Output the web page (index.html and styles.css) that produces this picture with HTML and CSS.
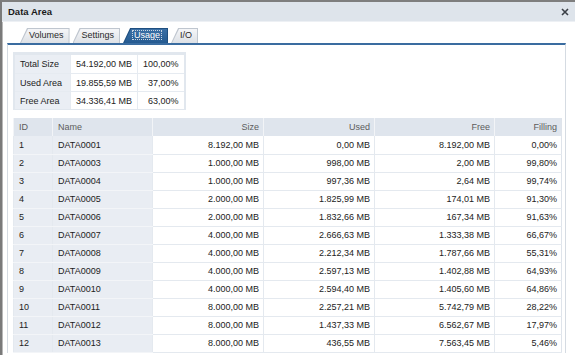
FILE: index.html
```html
<!DOCTYPE html>
<html lang="en">
<head>
    <meta charset="UTF-8">
    <title>Data Area</title>
    <link rel="stylesheet" href="styles.css">
</head>
<body>
    <div class="window">
        <div class="titlebar">
            <span class="title">Data Area</span>
            <svg class="close" width="8" height="8" viewBox="0 0 8 8">
                <path d="M1 1L7 7M7 1L1 7" stroke="#3a3f46" stroke-width="1.6"/>
            </svg>
        </div>
        <div class="tabs">
            <div class="tab"><span>Volumes</span></div>
            <div class="tab"><span>Settings</span></div>
            <div class="tab active"><span>Usage</span></div>
            <div class="tab"><span>I/O</span></div>
        </div>
        <div class="panel">
            <table class="summary">
                <tr><td class="label">Total Size</td><td class="val">54.192,00 MB</td><td class="pct">100,00%</td></tr>
                <tr><td class="label">Used Area</td><td class="val">19.855,59 MB</td><td class="pct">37,00%</td></tr>
                <tr><td class="label">Free Area</td><td class="val">34.336,41 MB</td><td class="pct">63,00%</td></tr>
            </table>
            <table class="grid">
                <colgroup>
                    <col style="width:39px"><col style="width:100px"><col style="width:111px">
                    <col style="width:111px"><col style="width:120px"><col style="width:67px">
                </colgroup>
                <thead>
                    <tr><th>ID</th><th>Name</th><th class="num">Size</th><th class="num">Used</th><th class="num">Free</th><th class="num">Filling</th></tr>
                </thead>
                <tbody>
                    <tr><td class="key">1</td><td class="key">DATA0001</td><td class="num">8.192,00 MB</td><td class="num">0,00 MB</td><td class="num">8.192,00 MB</td><td class="num">0,00%</td></tr>
                    <tr><td class="key">2</td><td class="key">DATA0003</td><td class="num">1.000,00 MB</td><td class="num">998,00 MB</td><td class="num">2,00 MB</td><td class="num">99,80%</td></tr>
                    <tr><td class="key">3</td><td class="key">DATA0004</td><td class="num">1.000,00 MB</td><td class="num">997,36 MB</td><td class="num">2,64 MB</td><td class="num">99,74%</td></tr>
                    <tr><td class="key">4</td><td class="key">DATA0005</td><td class="num">2.000,00 MB</td><td class="num">1.825,99 MB</td><td class="num">174,01 MB</td><td class="num">91,30%</td></tr>
                    <tr><td class="key">5</td><td class="key">DATA0006</td><td class="num">2.000,00 MB</td><td class="num">1.832,66 MB</td><td class="num">167,34 MB</td><td class="num">91,63%</td></tr>
                    <tr><td class="key">6</td><td class="key">DATA0007</td><td class="num">4.000,00 MB</td><td class="num">2.666,63 MB</td><td class="num">1.333,38 MB</td><td class="num">66,67%</td></tr>
                    <tr><td class="key">7</td><td class="key">DATA0008</td><td class="num">4.000,00 MB</td><td class="num">2.212,34 MB</td><td class="num">1.787,66 MB</td><td class="num">55,31%</td></tr>
                    <tr><td class="key">8</td><td class="key">DATA0009</td><td class="num">4.000,00 MB</td><td class="num">2.597,13 MB</td><td class="num">1.402,88 MB</td><td class="num">64,93%</td></tr>
                    <tr><td class="key">9</td><td class="key">DATA0010</td><td class="num">4.000,00 MB</td><td class="num">2.594,40 MB</td><td class="num">1.405,60 MB</td><td class="num">64,86%</td></tr>
                    <tr><td class="key">10</td><td class="key">DATA0011</td><td class="num">8.000,00 MB</td><td class="num">2.257,21 MB</td><td class="num">5.742,79 MB</td><td class="num">28,22%</td></tr>
                    <tr><td class="key">11</td><td class="key">DATA0012</td><td class="num">8.000,00 MB</td><td class="num">1.437,33 MB</td><td class="num">6.562,67 MB</td><td class="num">17,97%</td></tr>
                    <tr><td class="key">12</td><td class="key">DATA0013</td><td class="num">8.000,00 MB</td><td class="num">436,55 MB</td><td class="num">7.563,45 MB</td><td class="num">5,46%</td></tr>
                </tbody>
            </table>
        </div>
    </div>
</body>
</html>
```

FILE: styles.css
```css
* {
    box-sizing: border-box;
    margin: 0;
    padding: 0;
}
body {
    font-family: 'Liberation Sans', Arial, sans-serif;
    font-size: 9px;
    color: #222;
    background-color: #fff;
    overflow: hidden;
}
.window {
    height: 355px;
    border-top: 2px solid #7e7e7e;
    border-left: 2px solid #7a7a7a;
    box-shadow: inset 1px 0 0 #b8b8b8;
    background-color: #fff;
}
.titlebar {
    display: flex;
    justify-content: space-between;
    align-items: center;
    height: 20px;
    padding: 0 6px 0 6px;
    background-color: #dee4eb;
    border-bottom: 1px solid #edf0f4;
}
.title {
    font-weight: bold;
    font-size: 9.5px;
    color: #1a1a1a;
}
/* tabs */
.tabs {
    display: flex;
    gap: 3px;
    height: 15px;
    margin: 6px 0 0 18px;
}
.tab {
    position: relative;
    height: 15px;
    line-height: 15px;
    padding: 0 6px 0 9px;
    color: #2a2a2a;
    background-color: #bfc6cf;
    clip-path: polygon(0 100%, 7px 0, 100% 0, 100% 100%);
}
.tab::before {
    content: '';
    position: absolute;
    top: 1px;
    left: 1px;
    right: 1px;
    bottom: 0;
    background: linear-gradient(#f5f6f8, #dde1e6);
    clip-path: polygon(0 100%, 7px 0, 100% 0, 100% 100%);
}
.tab span {
    position: relative;
}
.tab.active {
    background-color: #1f4f80;
}
.tab.active::before {
    background: linear-gradient(#3b70a6, #255b91);
}
.tab.active span {
    color: #fff;
    padding: 0 2px;
    outline: 1px dotted #c9d6e4;
    outline-offset: -1px;
}
/* content */
.panel {
    height: 310px;
    margin: 0 9px 0 5px;
    padding: 7px 4px 0 5px;
    border: 1px solid #d5dbe2;
    border-top: 2px solid #3a6ca0;
    border-bottom: none;
}
.summary {
    border-collapse: separate;
    border-spacing: 0;
    border: 2px solid #e1e7ee;
    border-top-width: 3px;
    border-bottom-width: 1px;
}
.summary td {
    height: 18px;
    padding: 0 5px;
    white-space: nowrap;
}
.summary tr + tr td {
    border-top: 1px solid #e6ebf1;
}
.summary .label {
    width: 55px;
    background-color: #eaeef4;
}
.summary .val {
    width: 67px;
    border-left: 1px solid #e6ebf1;
}
.summary .pct {
    width: 46px;
    text-align: right;
    border-left: 1px solid #e6ebf1;
}
.grid {
    width: 548px;
    margin-top: 8px;
    border-collapse: collapse;
    table-layout: fixed;
    border-right: 1px solid #dfe4eb;
}
.grid th {
    height: 18px;
    padding: 0 4px 0 5px;
    font-weight: normal;
    text-align: left;
    color: #5c5c5c;
    background-color: #dfe5ed;
    border-left: 1px solid #f2f4f7;
}
.grid td {
    height: 18px;
    padding: 0 4px 0 5px;
    white-space: nowrap;
    border-bottom: 1px solid #e4e9ef;
    border-left: 1px solid #e4e9ef;
}
.grid td.key {
    background-color: #e9edf3;
    border-bottom-color: #f3f5f8;
}
.grid .num {
    text-align: right;
}
```
